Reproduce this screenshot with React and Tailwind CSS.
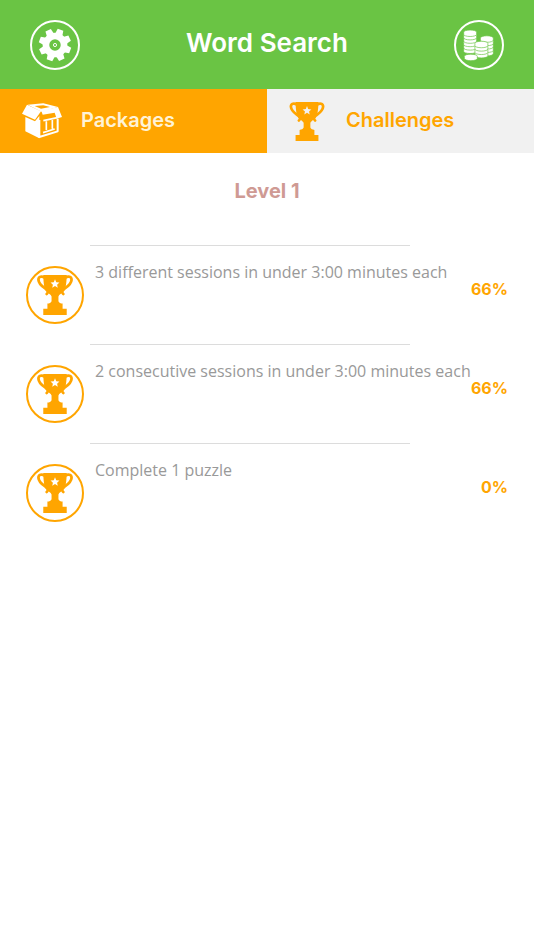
import { useState } from 'react'

const challenges = [
  { id: 1, text: '3 different sessions in under 3:00 minutes each', percent: 66 },
  { id: 2, text: '2 consecutive sessions in under 3:00 minutes each', percent: 66 },
  { id: 3, text: 'Complete 1 puzzle', percent: 0 },
]

function GearIcon() {
  return (
    <svg viewBox="0 0 32 32" className="w-[34px] h-[34px]" fill="currentColor" aria-hidden="true">
      {[20, 65, 110, 155, 200, 245, 290, 335].map(a => (
        <path key={a} d="M12.4 6 L13.2 0.8 H18.8 L19.6 6 Z" transform={`rotate(${a} 16 16)`} />
      ))}
      <path
        fillRule="evenodd"
        d="M16 4.4a11.6 11.6 0 1 0 0 23.2a11.6 11.6 0 1 0 0-23.2Z M16 10.6a5.4 5.4 0 1 1 0 10.8a5.4 5.4 0 1 1 0-10.8Z"
      />
      <circle cx="16" cy="16" r="1.5" fill="none" stroke="currentColor" strokeWidth="0.9" />
    </svg>
  )
}

function CoinStack({ x, y, count }) {
  // Drawn from the bottom coin up so every coin overlaps the one below it.
  return Array.from({ length: count }, (_, i) => y + (count - 1 - i) * 10).map(top => (
    <path
      key={top}
      d={`M${x - 19} ${top} a19 6 0 0 1 38 0 v7 a19 6 0 0 1 -38 0 Z`}
      fill="currentColor"
      stroke="#6ac444"
      strokeWidth="2"
    />
  ))
}

function CoinsIcon() {
  return (
    <svg viewBox="58 58 94 94" className="w-8 h-8" aria-hidden="true">
      <CoinStack x={79} y={67} count={6} />
      <CoinStack x={128} y={84} count={5} />
      <CoinStack x={112} y={100} count={4} />
      <CoinStack x={81} y={138} count={1} />
    </svg>
  )
}

function TrophyIcon({ className }) {
  return (
    <svg viewBox="0 0 104 116" className={className} fill="currentColor" aria-hidden="true">
      <path
        fillRule="evenodd"
        d="M18 0H86V6C85 22 84 38 78 46C71 54 64 57 62 62V76C64 81 68 82 74 83V98H86V116H18V98H30V83C36 82 40 81 42 76V62C40 57 33 54 26 46C20 38 19 22 18 6Z
           M52 12L48.5 21L39 22L46 28L44 37L52 32L60 37L58 28L65 22L55.5 21Z"
      />
      <g fill="none" stroke="currentColor" strokeWidth="8" strokeLinecap="round">
        <path d="M22 8C14 2 4 4 4 14C5 27 14 32 25 40C32 45 33 51 28 55" />
        <path d="M82 8C90 2 100 4 100 14C99 27 90 32 79 40C72 45 71 51 76 55" />
      </g>
    </svg>
  )
}

function BoxIcon() {
  return (
    <svg viewBox="0 0 120 106" className="w-10 h-9" fill="currentColor" aria-hidden="true">
      <path d="M17 4L64 0L108 11L58 25Z" />
      <path d="M38 8L64 6L84 11L57 16Z" fill="#ffa500" />
      <path d="M15 4L0 31L39 49L57 24Z" />
      <path d="M10 41L39 54L52 38V105L10 84Z" />
      <path d="M58 22L108 11L120 41L104 46L98 28L62 34Z" />
      <g fill="none" stroke="currentColor" strokeWidth="6" strokeLinejoin="round">
        <path d="M52 50V101L107 84V46" />
        <path d="M64 52L106 43M73 54V80M91 50V76M63 88L98 77" strokeWidth="5" />
      </g>
    </svg>
  )
}

function RoundButton({ label, children }) {
  return (
    <button
      aria-label={label}
      className="w-[50px] h-[50px] rounded-full border-2 border-white text-white flex items-center justify-center"
    >
      {children}
    </button>
  )
}

function ChallengeRow({ challenge }) {
  return (
    <li className="grid grid-cols-[64px_minmax(0,1fr)_auto] h-[99px] px-[26px]">
      <div className="mt-[21px] w-[58px] h-[58px] rounded-full border-2 border-[#ffa500] text-[#ffa500] flex items-center justify-center">
        <TrophyIcon className="w-9 h-10" />
      </div>
      <div>
        <div className="w-[320px] h-px bg-[#dcdcdc]"></div>
        <p className="mt-3.5 pl-[5px] font-['Open_Sans',sans-serif] text-base leading-6 text-[#999999] whitespace-nowrap">
          {challenge.text}
        </p>
      </div>
      <span className="mt-8 text-right text-base leading-6 font-bold text-[#ffa500]">
        {challenge.percent}%
      </span>
    </li>
  )
}

export default function App() {
  const [tab, setTab] = useState('challenges')

  return (
    <div className="min-h-screen bg-white font-[Inter,sans-serif]">
      <header className="h-[89px] px-[30px] bg-[#6ac444] flex items-center justify-between">
        <RoundButton label="Settings"><GearIcon /></RoundButton>
        <h1 className="pb-1 text-[26px] leading-8 font-semibold text-white">Word Search</h1>
        <RoundButton label="Coins"><CoinsIcon /></RoundButton>
      </header>

      <nav className="grid grid-cols-2 h-16">
        <button
          aria-pressed={tab === 'packages'}
          onClick={() => setTab('packages')}
          className="flex items-center pl-[22px] gap-[19px] bg-[#ffa500] text-white"
        >
          <BoxIcon />
          <span className="pb-0.5 text-xl font-semibold text-[#fff3d6]">Packages</span>
        </button>
        <button
          aria-pressed={tab === 'challenges'}
          onClick={() => setTab('challenges')}
          className="flex items-center pl-5 gap-[19px] bg-[#f1f1f1] text-[#ffa500]"
        >
          <TrophyIcon className="w-10 h-[39px]" />
          <span className="pb-0.5 text-xl font-semibold">Challenges</span>
        </button>
      </nav>

      <main className="pt-6">
        <h2 className="text-center text-xl leading-7 font-bold text-[#cf9a94]">Level 1</h2>
        <ul className="pt-10">
          {challenges.map(c => (
            <ChallengeRow key={c.id} challenge={c} />
          ))}
        </ul>
      </main>
    </div>
  )
}
